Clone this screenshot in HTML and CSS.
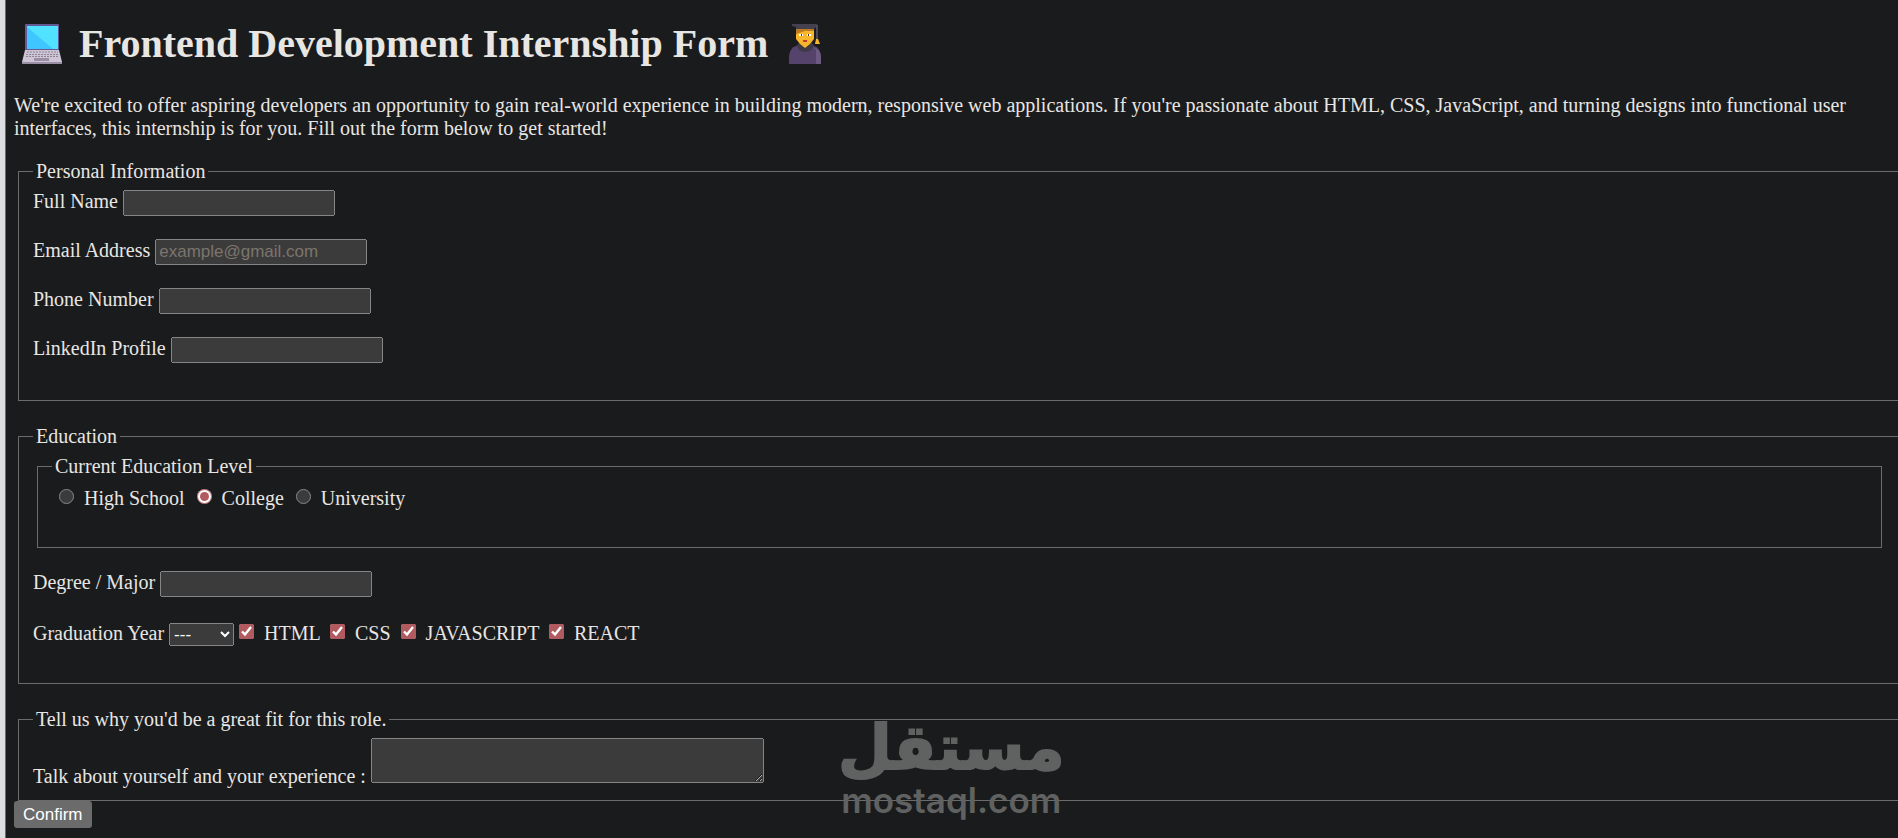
FILE: index.html
```
<!DOCTYPE html>
<html lang="en">
<head>
<meta charset="utf-8">
<title>Frontend Development Internship Form</title>
<link rel="stylesheet" href="styles.css">
</head>

<body>
<h1>
  <svg class="emoji" viewBox="0 0 40 40" aria-hidden="true">
    <rect x="3" y="0" width="34" height="27" rx="1" fill="#635994"/>
    <rect x="5" y="2" width="31" height="23" fill="#50e2ff"/>
    <path d="M5 3L31 25H5z" fill="#3fc5ff"/>
    <path d="M3 26h34l3 12v2H0v-2z" fill="#cdc4d6"/>
    <path d="M0 38h40v2H0z" fill="#998ea4"/>
    <path d="M5 28h31M4 30.500h33M4 32.500h33" stroke="#8d8495" stroke-dasharray="2 1"/>
    <rect x="12" y="34" width="15" height="3" fill="#998ea4"/>
  </svg>
  <span>Frontend Development Internship Form</span>
  <svg class="emoji" viewBox="0 0 40 40" aria-hidden="true">
    <path d="M4 40V34Q4 22 15 21H25Q36 22 36 34V40z" fill="#55436b"/>
    <path d="M28 23Q36 25 36 34V40H31V26z" fill="#6c5a83"/>
    <path d="M12 21L15 18H26L29 21Q27 28 20 28T12 21z" fill="#3f3a46"/>
    <path d="M11 5H29V15L25 20L20 24L15 20L11 15z" fill="#f8b62c"/>
    <path d="M11 5H29V7H20L11 10z" fill="#bd7b22"/>
    <path d="M14 11h4M22 11h4" stroke="#fff" stroke-width="2"/>
    <path d="M16 11h1M23 11h1" stroke="#4b3541" stroke-width="2"/>
    <path d="M18 17h4" stroke="#bd3d31" stroke-width="2"/>
    <path d="M7 0H32V2L29 5H11V3L7 2z" fill="#46414e"/>
    <path d="M32 1V16" stroke="#4d4857" stroke-width="2"/>
    <path d="M31 15h2l2 5h-5z" fill="#f8b62c"/>
  </svg>
</h1>

<p>We're excited to offer aspiring developers an opportunity to gain real-world experience in building modern, responsive web applications. If you're passionate about HTML, CSS, JavaScript, and turning designs into functional user interfaces, this internship is for you. Fill out the form below to get started!</p>

<form>
  <fieldset>
    <legend>Personal Information</legend>
    <div class="row">
      <label for="name">Full Name</label>
      <input type="text" id="name">
    </div>
    <div class="row">
      <label for="email">Email Address</label>
      <input type="email" id="email" placeholder="example@gmail.com">
    </div>
    <div class="row">
      <label for="phone">Phone Number</label>
      <input type="tel" id="phone">
    </div>
    <div class="row">
      <label for="linkedin">LinkedIn Profile</label>
      <input type="url" id="linkedin">
    </div>
  </fieldset>

  <fieldset>
    <legend>Education</legend>
    <fieldset class="level">
      <legend>Current Education Level</legend>
      <div class="row">
        <input type="radio" name="level" id="school">
        <label for="school">High School</label>
        <input type="radio" name="level" id="college" checked>
        <label for="college">College</label>
        <input type="radio" name="level" id="university">
        <label for="university">University</label>
      </div>
    </fieldset>
    <div class="row">
      <label for="degree">Degree / Major</label>
      <input type="text" id="degree">
    </div>
    <div class="row">
      <label for="year">Graduation Year</label>
      <select id="year">
        <option>---</option>
        <option>2024</option>
        <option>2025</option>
        <option>2026</option>
      </select><input type="checkbox" id="html" checked>
      <label for="html">HTML</label>
      <input type="checkbox" id="css" checked>
      <label for="css">CSS</label>
      <input type="checkbox" id="js" checked>
      <label for="js">JAVASCRIPT</label>
      <input type="checkbox" id="react" checked>
      <label for="react">REACT</label>
    </div>
  </fieldset>

  <fieldset class="about">
    <legend>Tell us why you'd be a great fit for this role.</legend>
    <label for="about">Talk about yourself and your experience :</label>
    <textarea id="about"></textarea>
  </fieldset>
  <button type="submit">Confirm</button>
</form>

<div class="watermark">
  <span class="arabic" lang="ar" dir="rtl">مستقل</span>
  <span class="latin">mostaql.com</span>
</div>
</body>
</html>
```

FILE: styles.css
```
html {
  color-scheme: dark;
  background-color: #1a1b1c;
  overflow-x: hidden;
}

body {
  position: relative;
  box-sizing: border-box;
  min-height: 100vh;
  margin: 0;
  padding: 21px 0 0 9px;
  border-left: 5px solid #dcdde1;
  box-shadow: inset 1px 0 #6b6c6e;
  color: #e8e6e3;
  font-family: "Liberation Serif", "Times New Roman", serif;
  font-size: 20px;
  line-height: 23px;
}

h1 {
  display: flex;
  align-items: center;
  gap: 17px;
  margin: 0 0 27px 8px;
  font-size: 40px;
  line-height: 46px;
}

.emoji {
  width: 40px;
  height: 40px;
}

p {
  margin: 0 0 20px;
}

fieldset {
  margin: 0 -2px 24px 4px;
  padding: 7px 15px 14px 14px;
  border: 1px solid #6b6b6b;
}

legend {
  padding: 0 3px;
}

.row {
  margin-bottom: 23px;
}

.level {
  margin: 0 2px 23px 4px;
}

input, select, textarea, button {
  font-family: "Liberation Sans", Arial, sans-serif;
  font-size: 17px;
}

input, textarea {
  box-sizing: border-box;
  margin: 0;
  accent-color: #b15b60;
}

input {
  width: 212px;
  height: 26px;
}

input::placeholder {
  color: #7b756d;
}

input[type="radio"], input[type="checkbox"] {
  width: 15px;
  height: 15px;
  margin: 4px 5px 0;
  vertical-align: 1px;
}

input[type="radio"] {
  margin-left: 7px;
}

select {
  width: 65px;
  height: 23px;
  margin: 0;
}

textarea {
  width: 393px;
  height: 45px;
}

.about {
  margin-bottom: 0;
  padding-bottom: 12px;
}

button {
  display: block;
  height: 27px;
  padding: 0 9px;
  border: 0;
  border-radius: 3px;
  background-color: #6b6b6b;
  color: #fff;
}

/* logo lies over the form */
.watermark {
  position: absolute;
  top: 718px;
  left: 44%;
  display: flex;
  flex-direction: column;
  align-items: center;
  gap: 4px;
  color: #606161;
  font-weight: bold;
  pointer-events: none;
}

.arabic {
  font-family: "DejaVu Sans", sans-serif;
  font-size: 62px;
  line-height: 60px;
  -webkit-text-stroke: 2px #606161;
}

.latin {
  font-family: Inter, sans-serif;
  font-size: 35px;
  font-weight: 600;
  line-height: 36px;
}
```
